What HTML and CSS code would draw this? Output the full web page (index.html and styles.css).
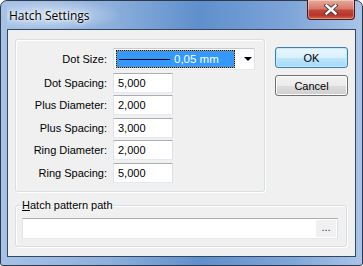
FILE: index.html
```html
<!DOCTYPE html>
<html lang="en-US">
    <head>
        <meta charset="utf-8">
        <title>Hatch Settings</title>
        <link rel="stylesheet" href="styles.css">
    </head>
    <body>
        <div class="window">
            <div class="titlebar">
                <span class="title">Hatch Settings</span>
                <button class="close" type="button">
                    <svg width="14" height="11" viewBox="0 0 14 11">
                        <path d="M2.5 1.5 L11.5 9.5 M11.5 1.5 L2.5 9.5" stroke="#3b3b3b" stroke-width="4.2" stroke-linecap="square"/>
                        <path d="M2.5 1.5 L11.5 9.5 M11.5 1.5 L2.5 9.5" stroke="#ffffff" stroke-width="2.4" stroke-linecap="square"/>
                    </svg>
                </button>
            </div>

            <div class="client">
                <div class="top">
                    <fieldset class="group params">
                        <div class="grid">
                            <label>Dot Size:</label>
                            <div class="combo">
                                <div class="combo-sel">
                                    <span class="line"></span>
                                    <span class="combo-text">0,05 mm</span>
                                </div>
                                <span class="arrow"></span>
                            </div>

                            <label>Dot Spacing:</label><input type="text" class="field" value="5,000">
                            <label>Plus Diameter:</label><input type="text" class="field" value="2,000">
                            <label>Plus Spacing:</label><input type="text" class="field" value="3,000">
                            <label>Ring Diameter:</label><input type="text" class="field" value="2,000">
                            <label>Ring Spacing:</label><input type="text" class="field" value="5,000">
                        </div>
                    </fieldset>

                    <div class="buttons">
                        <button class="btn default" type="button">OK</button>
                        <button class="btn" type="button">Cancel</button>
                    </div>
                </div>

                <fieldset class="group path">
                    <legend><u>H</u>atch pattern path</legend>
                    <div class="pathbox">
                        <span class="browse">...</span>
                    </div>
                </fieldset>
            </div>
        </div>
    </body>
</html>
```

FILE: styles.css
```css
body {
    margin: 0;
    background-color: #ffffff;
    font-family: "Liberation Sans", Arial, sans-serif;
    font-size: 11px;
}

.window {
    width: 363px;
    height: 266px;
    box-sizing: border-box;
    display: flex;
    flex-direction: column;
    padding: 0 6px 8px 6px;
    border: 1px solid #30394a;
    border-radius: 7px 7px 3px 3px;
    background:
        linear-gradient(90deg, #a6c2e6 0%, #8db0dd 30%, #5f8fcc 55%, #7ea5d8 80%, #a9c4e8 100%);
}

.titlebar {
    height: 28px;
    display: flex;
    align-items: flex-start;
    justify-content: space-between;
    background: radial-gradient(ellipse 70px 16px at 45px 14px, rgba(255,255,255,0.55), rgba(255,255,255,0));
}

.title {
    margin: 6px 0 0 2px;
    font-family: "Open Sans", "Noto Sans", sans-serif;
    font-size: 12px;
    color: #000000;
    text-shadow: 0 0 6px #ffffff, 0 0 3px #ffffff;
}

.close {
    width: 48px;
    height: 20px;
    margin: -1px 1px 0 0;
    padding: 0;
    display: flex;
    align-items: center;
    justify-content: center;
    border: 1px solid #4a1c16;
    border-top: none;
    border-radius: 0 0 4px 4px;
    background: linear-gradient(#e8ab9c 0%, #d77a6b 45%, #c2453a 55%, #b7352b 80%, #d4634f 100%);
    box-shadow: inset 0 0 0 1px rgba(255,255,255,0.35);
}

.client {
    flex: 1;
    border: 1px solid #35475f;
    background-color: #f0f0f0;
    padding: 9px 7px 0 7px;
}

.top {
    display: flex;
    align-items: flex-start;
}

.group {
    margin: 0;
    border: 1px solid #d5dfe5;
    border-radius: 3px;
    box-shadow: inset 1px 1px 0 #ffffff, 1px 1px 0 #ffffff;
}

.params {
    width: 250px;
    height: 153px;
    box-sizing: border-box;
    padding: 8px 0 0 0;
}

.grid {
    display: grid;
    grid-template-columns: 91px 142px;
    grid-template-rows: 22px repeat(5, 20px);
    column-gap: 6px;
    row-gap: 2.5px;
    align-items: center;
}

label {
    text-align: right;
    color: #000000;
}

.field {
    width: 60px;
    height: 20px;
    box-sizing: border-box;
    margin: 0;
    padding: 0 4px;
    font-family: "Liberation Sans", Arial, sans-serif;
    font-size: 11px;
    color: #000000;
    background-color: #ffffff;
    border: 1px solid;
    border-color: #abadb3 #dbdfe6 #e3e9ef #e2e3ea;
}

.combo {
    height: 22px;
    box-sizing: border-box;
    display: flex;
    align-items: center;
    padding: 0 2px;
    background-color: #ffffff;
    border: 1px solid;
    border-color: #c6cbd3 #dde2e8 #e3e9ef #dde2e8;
}

.combo-sel {
    width: 120px;
    height: 18px;
    box-sizing: border-box;
    display: flex;
    align-items: center;
    border: 1px dotted #1a1a1a;
    background:
        linear-gradient(#3399ff, #3399ff) padding-box,
        linear-gradient(#d8963c, #d8963c) border-box;
}

.line {
    width: 51px;
    height: 1px;
    margin-left: 2px;
    background-color: #000000;
}

.combo-text {
    margin-left: 4px;
    color: #ffffff;
    font-size: 11.5px;
}

.arrow {
    margin-left: 9px;
    width: 0;
    height: 0;
    border-left: 4px solid transparent;
    border-right: 4px solid transparent;
    border-top: 4px solid #000000;
}

.buttons {
    margin: 8px 0 0 10px;
    display: flex;
    flex-direction: column;
    gap: 7px;
}

.btn {
    width: 73px;
    height: 21px;
    padding: 0;
    font-family: "Liberation Sans", Arial, sans-serif;
    font-size: 11px;
    color: #000000;
    border: 1px solid #707070;
    border-radius: 3px;
    background: linear-gradient(#f2f2f2 0%, #ebebeb 50%, #dddddd 51%, #cfcfcf 100%);
    box-shadow: inset 0 0 0 1px #fcfcfc;
}

.btn.default {
    border-color: #3c7fb1;
    background: linear-gradient(#eaf6fd 0%, #d9f0fc 50%, #bee6fd 51%, #a7d9f5 100%);
    box-shadow: inset 0 0 0 1px #c2e8fd;
}

.path {
    width: 332px;
    box-sizing: border-box;
    margin-top: 6px;
    padding: 6px 8px 7px 6px;
}

.path legend {
    margin-left: -1px;
    padding: 0 1px;
    line-height: 14px;
    color: #000000;
}

.pathbox {
    height: 21px;
    box-sizing: border-box;
    display: flex;
    justify-content: flex-end;
    padding: 1px;
    background-color: #ffffff;
    border: 1px solid;
    border-color: #abadb3 #dbdfe6 #e3e9ef #e2e3ea;
}

.browse {
    width: 20px;
    height: 17px;
    background-color: #f0f0f0;
    color: #3a2a60;
    font-size: 11px;
    line-height: 15px;
    text-align: center;
}
```
